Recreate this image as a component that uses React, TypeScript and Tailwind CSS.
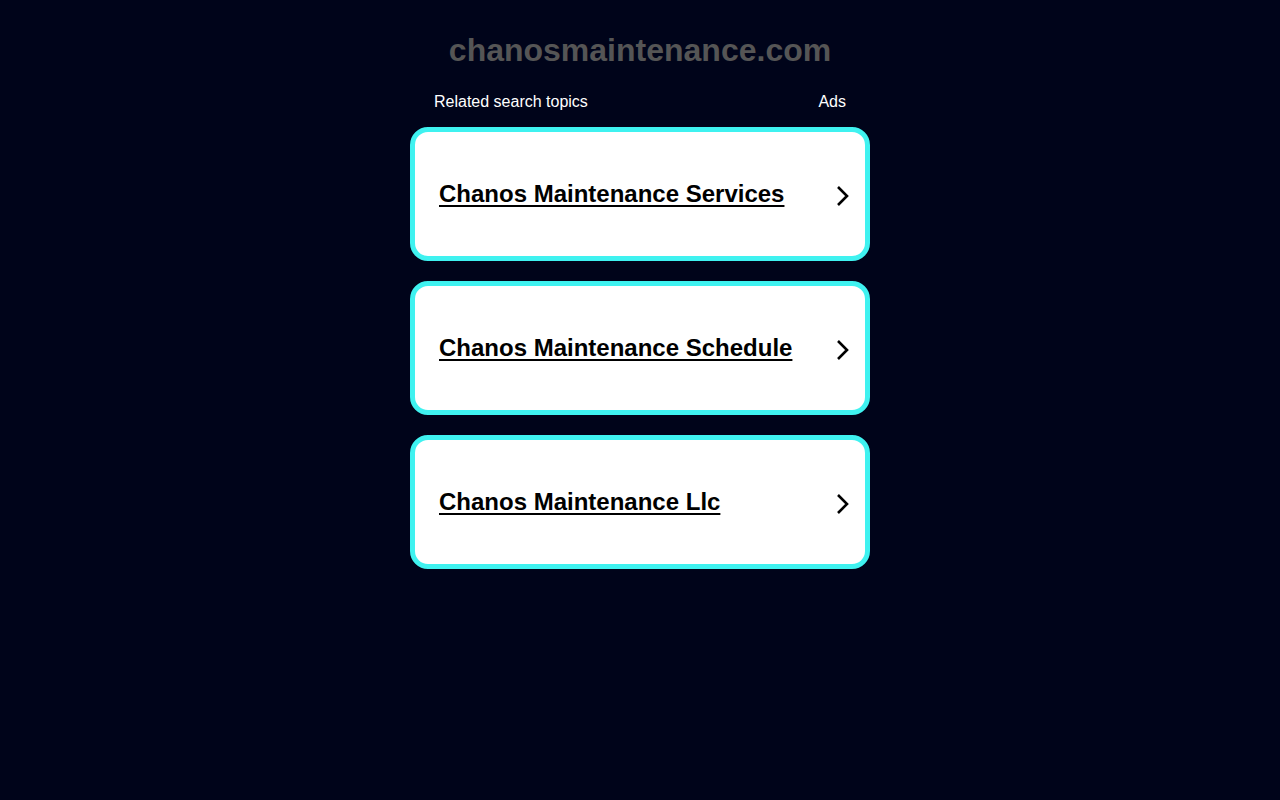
const topics = [
  'Chanos Maintenance Services',
  'Chanos Maintenance Schedule',
  'Chanos Maintenance Llc',
];

function Chevron() {
  return (
    <svg width="14" height="22" viewBox="0 0 14 22" className="shrink-0 mt-[3px]">
      <polyline points="3,2 12,11 3,20" fill="none" stroke="#000" strokeWidth="2.6" />
    </svg>
  );
}

export default function App() {
  return (
    <div
      className="min-h-screen bg-[#00041a] flex flex-col items-center"
      style={{ fontFamily: '"Liberation Sans", Arial, sans-serif' }}
    >
      <div className="w-[460px] flex flex-col">
        <h1 className="pt-[32px] text-center text-[32px] leading-[36px] font-bold text-[#555555]">
          chanosmaintenance.com
        </h1>
        <div className="mt-[24px] px-6 flex justify-between text-base leading-5 text-white">
          <span>Related search topics</span>
          <span>Ads</span>
        </div>
        <div className="mt-[15px] flex flex-col gap-5">
          {topics.map((t) => (
            <a
              key={t}
              href="#"
              className="h-[134px] flex items-center justify-between bg-white border-[5px] border-[#3ff2f0] rounded-[18px] pl-6 pr-4"
            >
              <span className="text-2xl leading-7 font-bold text-black underline underline-offset-[3px]">
                {t}
              </span>
              <Chevron />
            </a>
          ))}
        </div>
      </div>
    </div>
  );
}
